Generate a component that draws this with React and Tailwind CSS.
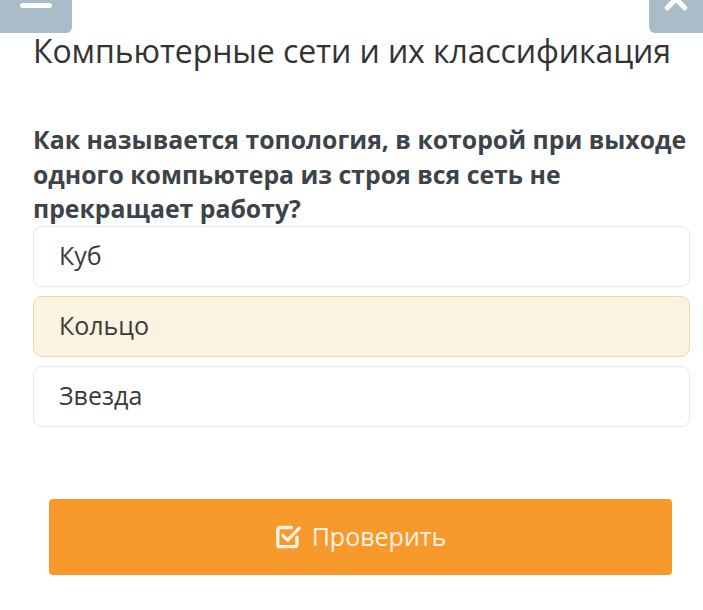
import { useState } from 'react'

const OPTIONS = ['Куб', 'Кольцо', 'Звезда']

function CheckSquare() {
  return (
    <svg className="w-[27px] h-[27px]" viewBox="0 0 24 24" fill="none" stroke="currentColor" strokeWidth={3} strokeLinecap="round" strokeLinejoin="round">
      <path d="M19.5 12.5V19a2 2 0 0 1-2 2H4.5a2 2 0 0 1-2-2V6a2 2 0 0 1 2-2h10" />
      <path d="M7 11l4.2 4.2L21.5 4.5" />
    </svg>
  )
}

export default function App() {
  const [selected, setSelected] = useState(1)

  return (
    <div className="relative w-[703px] h-[610px] bg-white overflow-hidden" style={{ fontFamily: '"Open Sans", sans-serif' }}>
      {/* top chrome buttons */}
      <div className="absolute left-0 top-0 w-[72px] h-[33px] bg-[#a9bcc7] rounded-br-[6px] flex justify-center">
        <div className="mt-[3px] w-[32px] h-[5px] bg-white rounded-sm" />
      </div>
      <div className="absolute right-0 top-0 w-[54px] h-[33px] bg-[#a9bcc7] rounded-bl-[6px] flex justify-center overflow-hidden">
        <svg className="w-[30px] h-[30px] -mt-[16px]" viewBox="0 0 24 24" fill="none" stroke="white" strokeWidth={4} strokeLinecap="round">
          <path d="M5 5l14 14M19 5L5 19" />
        </svg>
      </div>

      <div className="pt-[31px] px-[33px]">
        <h1 className="text-[32px] leading-[40px] text-[#333] whitespace-nowrap tracking-[-0.1px]">Компьютерные сети и их классификация</h1>

        <p className="mt-[51px] text-[24.8px] leading-[34.5px] font-bold text-[#3c4349] whitespace-nowrap">
          Как называется топология, в которой при выходе
          <br />
          одного компьютера из строя вся сеть не
          <br />
          прекращает работу?
        </p>

        <div className="mt-[0px] flex flex-col gap-[9px] w-[657px]">
          {OPTIONS.map((opt, i) => (
            <button
              key={opt}
              onClick={() => setSelected(i)}
              className={
                'h-[61px] rounded-[9px] border text-left pl-[25px] text-[25px] text-[#3a3a3a] ' +
                (selected === i ? 'bg-[#fbf2e0] border-[#efd9a8]' : 'bg-white border-[#e3e8ec]')
              }
            >
              {opt}
            </button>
          ))}
        </div>
      </div>

      <div className="px-[49px] mt-[72px]">
        <button className="w-[623px] h-[76px] rounded-[4px] bg-[#f89a2b] text-[#fdf3e4] flex items-center justify-center gap-[10px] text-[25px]">
          <CheckSquare />
          <span>Проверить</span>
        </button>
      </div>
    </div>
  )
}
